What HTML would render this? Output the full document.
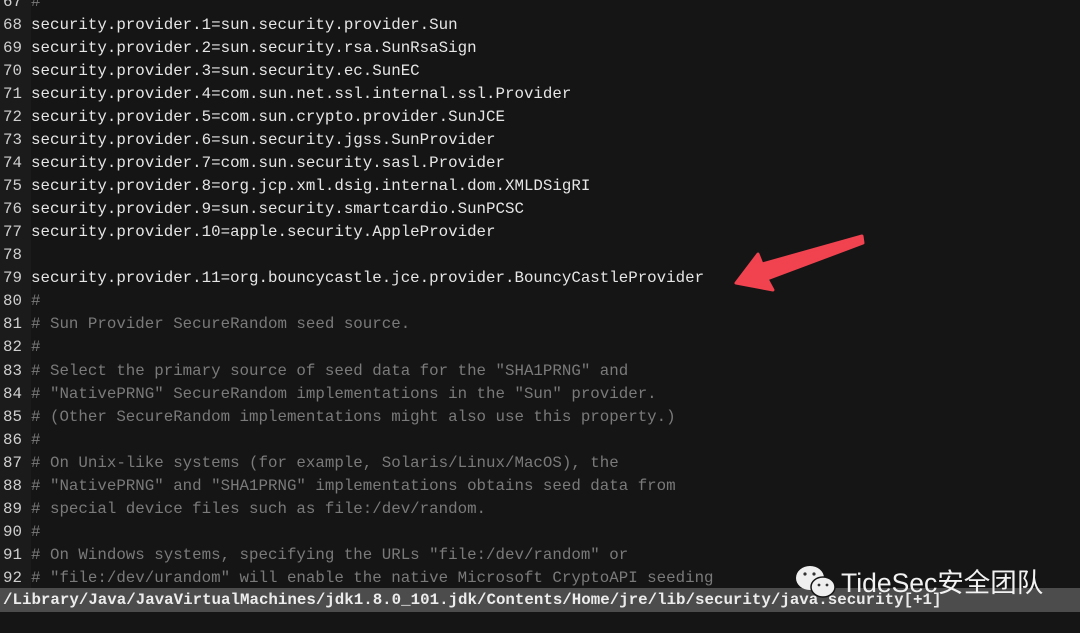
<!DOCTYPE html>
<html><head><meta charset="utf-8"><style>
html,body{margin:0;padding:0;}
body{width:1080px;height:633px;background:#151515;overflow:hidden;position:relative;font-family:"Liberation Mono",monospace;font-size:15.8px;}
.ed{position:absolute;left:0;top:-9px;width:1080px;}
.l{height:23.04px;line-height:23.04px;white-space:pre;color:#e6e6e6;}
.n{display:inline-block;width:31px;padding-left:3px;box-sizing:border-box;color:#d0d0d0;background:#1b1b1b;}
.c{color:#7a7a7a;}
.sb{position:absolute;left:0;top:588px;width:1080px;height:24px;background:#4c4c4c;line-height:24px;color:#ececec;font-weight:bold;padding-left:3px;white-space:pre;}
.wm{position:absolute;left:841px;top:567px;color:#f2f2f2;font-family:"Liberation Sans","Noto Sans CJK SC",sans-serif;font-size:26.5px;line-height:32px;}
</style></head><body>
<div class="ed">
<div class="l"><span class="n">67</span><span class="c">#</span></div>
<div class="l"><span class="n">68</span>security.provider.1=sun.security.provider.Sun</div>
<div class="l"><span class="n">69</span>security.provider.2=sun.security.rsa.SunRsaSign</div>
<div class="l"><span class="n">70</span>security.provider.3=sun.security.ec.SunEC</div>
<div class="l"><span class="n">71</span>security.provider.4=com.sun.net.ssl.internal.ssl.Provider</div>
<div class="l"><span class="n">72</span>security.provider.5=com.sun.crypto.provider.SunJCE</div>
<div class="l"><span class="n">73</span>security.provider.6=sun.security.jgss.SunProvider</div>
<div class="l"><span class="n">74</span>security.provider.7=com.sun.security.sasl.Provider</div>
<div class="l"><span class="n">75</span>security.provider.8=org.jcp.xml.dsig.internal.dom.XMLDSigRI</div>
<div class="l"><span class="n">76</span>security.provider.9=sun.security.smartcardio.SunPCSC</div>
<div class="l"><span class="n">77</span>security.provider.10=apple.security.AppleProvider</div>
<div class="l"><span class="n">78</span></div>
<div class="l"><span class="n">79</span>security.provider.11=org.bouncycastle.jce.provider.BouncyCastleProvider</div>
<div class="l"><span class="n">80</span><span class="c">#</span></div>
<div class="l"><span class="n">81</span><span class="c"># Sun Provider SecureRandom seed source.</span></div>
<div class="l"><span class="n">82</span><span class="c">#</span></div>
<div class="l"><span class="n">83</span><span class="c"># Select the primary source of seed data for the "SHA1PRNG" and</span></div>
<div class="l"><span class="n">84</span><span class="c"># "NativePRNG" SecureRandom implementations in the "Sun" provider.</span></div>
<div class="l"><span class="n">85</span><span class="c"># (Other SecureRandom implementations might also use this property.)</span></div>
<div class="l"><span class="n">86</span><span class="c">#</span></div>
<div class="l"><span class="n">87</span><span class="c"># On Unix-like systems (for example, Solaris/Linux/MacOS), the</span></div>
<div class="l"><span class="n">88</span><span class="c"># "NativePRNG" and "SHA1PRNG" implementations obtains seed data from</span></div>
<div class="l"><span class="n">89</span><span class="c"># special device files such as file:/dev/random.</span></div>
<div class="l"><span class="n">90</span><span class="c">#</span></div>
<div class="l"><span class="n">91</span><span class="c"># On Windows systems, specifying the URLs "file:/dev/random" or</span></div>
<div class="l"><span class="n">92</span><span class="c"># "file:/dev/urandom" will enable the native Microsoft CryptoAPI seeding</span></div>
</div>
<div class="sb">/Library/Java/JavaVirtualMachines/jdk1.8.0_101.jdk/Contents/Home/jre/lib/security/java.security[+1]</div>
<svg style="position:absolute;left:0;top:0" width="1080" height="633">
<path d="M862 236 L762 264 L758 254 L736 283 L773 290 L767 279 L863 243 Z" fill="#f0424f" stroke="#f0424f" stroke-width="3" stroke-linejoin="round"/>
<ellipse cx="810" cy="578" rx="14" ry="12" fill="#efefef"/>
<ellipse cx="823" cy="587" rx="12" ry="10" fill="#efefef" stroke="#151515" stroke-width="1.5"/>
<circle cx="805" cy="574" r="1.6" fill="#333"/><circle cx="814" cy="574" r="1.6" fill="#333"/>
<circle cx="819" cy="585" r="1.4" fill="#333"/><circle cx="827" cy="585" r="1.4" fill="#333"/>
</svg>
<div class="wm">TideSec安全团队</div>
</body></html>
